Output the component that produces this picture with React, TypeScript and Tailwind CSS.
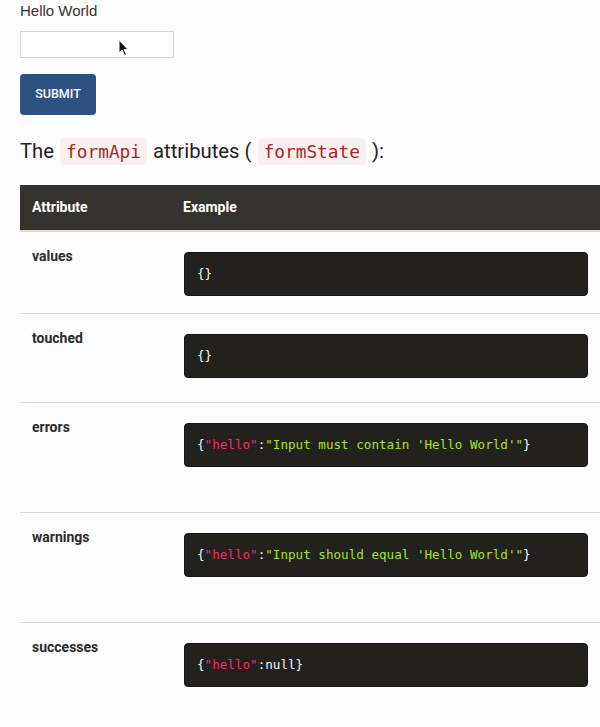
import React from 'react';

type Token = { text: string; color: string };

interface Row {
  name: string;
  height: string;
  tokens: Token[];
}

const punc = '#f8f8f2';
const key = '#f92672';
const str = '#a6e22e';

const rows: Row[] = [
  { name: 'values', height: 'h-[82px]', tokens: [{ text: '{}', color: punc }] },
  { name: 'touched', height: 'h-[89px]', tokens: [{ text: '{}', color: punc }] },
  {
    name: 'errors',
    height: 'h-[110px]',
    tokens: [
      { text: '{', color: punc },
      { text: '"hello"', color: key },
      { text: ':', color: punc },
      { text: '"Input must contain \'Hello World\'"', color: str },
      { text: '}', color: punc },
    ],
  },
  {
    name: 'warnings',
    height: 'h-[110px]',
    tokens: [
      { text: '{', color: punc },
      { text: '"hello"', color: key },
      { text: ':', color: punc },
      { text: '"Input should equal \'Hello World\'"', color: str },
      { text: '}', color: punc },
    ],
  },
  {
    name: 'successes',
    height: 'h-[110px]',
    tokens: [
      { text: '{', color: punc },
      { text: '"hello"', color: key },
      { text: ':null}', color: punc },
    ],
  },
];

const Cursor = () => (
  <svg width="12" height="18" viewBox="0 0 12 18" className="absolute left-[97px] top-[7px]">
    <path d="M1 1 L1 14 L4 11 L6.5 16.5 L8.5 15.5 L6 10.5 L10 10.5 Z" fill="#111" stroke="#fff" strokeWidth="1" />
  </svg>
);

const Chip = ({ children }: { children: React.ReactNode }) => (
  <code className="mx-[1px] rounded-[4px] bg-[#f6f1ec] px-[6px] py-[3px] font-['DejaVu_Sans_Mono',monospace] text-[17.8px] text-[#a8262f]">
    {children}
  </code>
);

export default function App() {
  return (
    <div className="min-h-[727px] overflow-hidden bg-[#fdfcfe] pl-5 font-['Roboto',sans-serif] text-[#222]">
      <div className="pt-[2px] font-['Liberation_Sans',sans-serif] text-[15px] leading-[18px] text-[#333]">Hello World</div>
      <div className="relative mt-[11px] h-[27px] w-[154px] border border-[#d4d4d4] bg-white">
        <Cursor />
      </div>
      <button className="mt-4 flex h-[41px] w-[76px] items-center justify-center rounded-[4px] bg-[#2d5281] font-['Roboto',sans-serif] text-[12.5px] font-medium text-white">
        SUBMIT
      </button>
      <h2 className="mt-[21px] text-[20.3px] leading-[30px] text-[#1f1f1f]">
        The <Chip>formApi</Chip> attributes ( <Chip>formState</Chip> ):
      </h2>
      <div className="mt-[18px] w-[600px]">
        <div className="flex h-[47px] items-center border-b-2 border-[#e3d9c9] bg-[#353330] text-[14px] font-bold text-white">
          <div className="w-[151px] pl-3">Attribute</div>
          <div className="pl-3">Example</div>
        </div>
        {rows.map((row) => (
          <div key={row.name} className={`flex border-b border-[#e3d9c9] ${row.height}`}>
            <div className="w-[151px] pl-3 pt-[15px] text-[14px] font-bold leading-[18px] text-[#2b2b2b]">{row.name}</div>
            <div className="pl-[13px] pt-5">
              <div className="flex h-[44px] w-[404px] items-center rounded-[4px] border border-[#151413] bg-[#23211e] px-3 font-['DejaVu_Sans_Mono',monospace] text-[12.6px] whitespace-pre">
                {row.tokens.map((t, i) => (
                  <span key={i} style={{ color: t.color }}>
                    {t.text}
                  </span>
                ))}
              </div>
            </div>
          </div>
        ))}
      </div>
    </div>
  );
}
